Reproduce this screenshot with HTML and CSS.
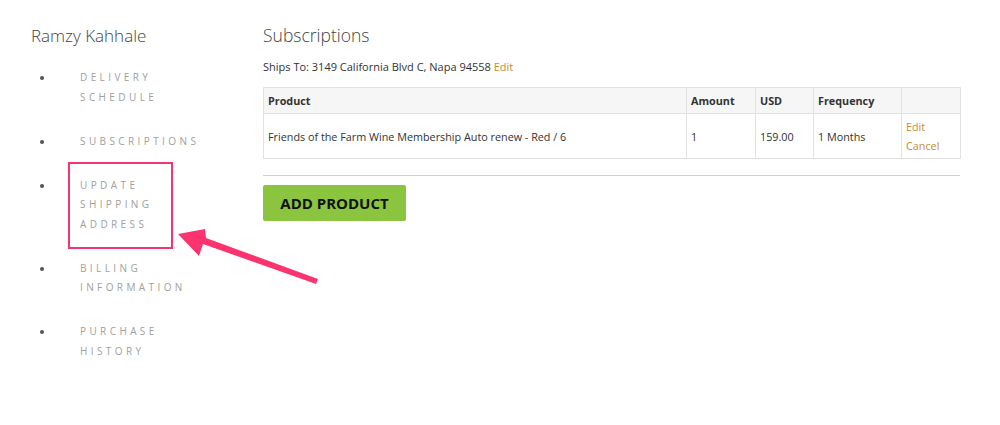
FILE: index.html
```html
<!DOCTYPE html>
<html>
<head>
<meta charset="utf-8">
<link rel="stylesheet" href="styles.css">
</head>
<body>
<div class="page">
  <aside class="sidebar">
    <div class="name">Ramzy Kahhale</div>
    <ul class="nav">
      <li><span class="dot"></span><a class="link">DELIVERY<br>SCHEDULE</a></li>
      <li><span class="dot"></span><a class="link">SUBSCRIPTIONS</a></li>
      <li><span class="dot"></span><a class="link highlight">UPDATE<br>SHIPPING<br>ADDRESS</a></li>
      <li><span class="dot"></span><a class="link">BILLING<br>INFORMATION</a></li>
      <li><span class="dot"></span><a class="link">PURCHASE<br>HISTORY</a></li>
    </ul>
  </aside>
  <main class="main">
    <h1 class="title">Subscriptions</h1>
    <p class="ships">Ships To: 3149 California Blvd C, Napa 94558 <a class="edit">Edit</a></p>
    <table class="subs">
      <thead>
        <tr>
          <th class="c-product">Product</th>
          <th class="c-amount">Amount</th>
          <th class="c-usd">USD</th>
          <th class="c-freq">Frequency</th>
          <th class="c-act"></th>
        </tr>
      </thead>
      <tbody>
        <tr>
          <td>Friends of the Farm Wine Membership Auto renew - Red / 6</td>
          <td>1</td>
          <td>159.00</td>
          <td>1 Months</td>
          <td class="actions"><a class="edit">Edit</a><br><a class="edit">Cancel</a></td>
        </tr>
      </tbody>
    </table>
    <hr class="rule">
    <button class="add">ADD PRODUCT</button>
  </main>
</div>
<svg class="arrow" viewBox="0 0 1000 425" width="1000" height="425">
  <polygon points="178,234 205,229 206,238 318,279 316,284 203,244 199,256" fill="#fb3470"/>
</svg>
</body>
</html>
```

FILE: styles.css
```css
html, body {
  margin: 0;
  padding: 0;
  background: #fff;
}
body {
  font-family: "Open Sans", "Liberation Sans", sans-serif;
  color: #333;
  width: 1000px;
  height: 425px;
  overflow: hidden;
  position: relative;
}
.page {
  display: flex;
  padding: 24px 0 0 31px;
}
.sidebar {
  width: 232px;
  flex: none;
}
.name {
  font-size: 17px;
  font-weight: 300;
  line-height: 24px;
  color: #444;
  margin-bottom: 20px;
}
.nav {
  list-style: none;
  margin: 0;
  padding: 0;
}
.nav li {
  display: flex;
  align-items: flex-start;
  margin-bottom: 24.5px;
}
.dot {
  width: 4px;
  height: 4px;
  border-radius: 50%;
  background: #555;
  margin: 8px 0 0 9px;
  flex: none;
}
.link {
  display: inline-block;
  margin-left: 36px;
  font-size: 10px;
  line-height: 19.5px;
  letter-spacing: 3.4px;
  color: #a0a0a0;
  font-weight: 400;
}
.link.highlight {
  border: 2px solid #f5356f;
  padding: 12px 19px 13px 10px;
  margin: -14px -21px -15px 24px;
}
.main {
  width: 697px;
  flex: none;
}
.title {
  margin: -1px 0 0 0;
  font-size: 17.5px;
  font-weight: 300;
  line-height: 24px;
  color: #444;
}
.ships {
  margin: 12px 0 12px 0;
  font-size: 11px;
  line-height: 16px;
  color: #333;
}
.edit {
  color: #c98b35;
}
.subs {
  width: 697px;
  border-collapse: collapse;
  font-size: 10.8px;
  color: #333;
  table-layout: fixed;
}
.subs th, .subs td {
  border: 1px solid #e2e2e2;
  text-align: left;
  padding: 0 4px;
}
.subs th {
  background: #f6f6f6;
  font-weight: 700;
  line-height: 16px;
  height: 25px;
  color: #333;
}
.subs td {
  line-height: 19px;
  height: 44px;
}
.c-product { width: 414px; }
.c-amount { width: 60px; }
.c-usd { width: 49px; }
.c-freq { width: 79px; }
.c-act { width: 50px; }
.rule {
  border: none;
  border-top: 1px solid #c8d2d2;
  margin: 16px 0 9px 0;
}
.add {
  display: block;
  width: 143px;
  height: 36px;
  background: #8bc53f;
  border: none;
  border-radius: 2px;
  font-family: "Open Sans", "Liberation Sans", sans-serif;
  font-weight: 700;
  font-size: 15px;
  color: #111;
  padding: 0;
  text-align: center;
}
.arrow {
  position: absolute;
  left: 0;
  top: 0;
  pointer-events: none;
}
```
